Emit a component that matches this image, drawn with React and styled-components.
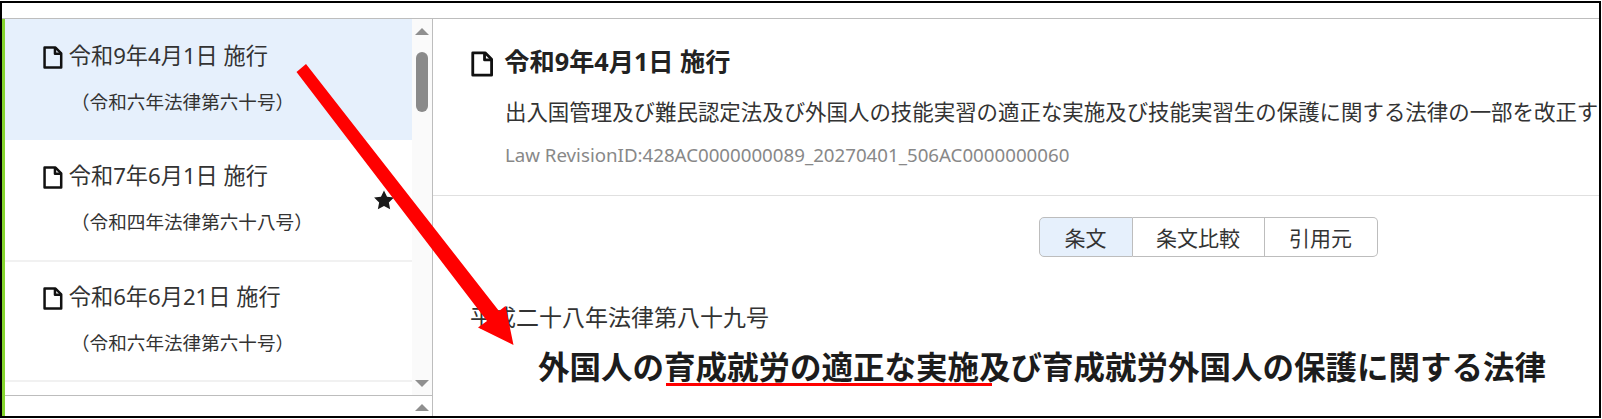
import React from "react";
import styled, { createGlobalStyle } from "styled-components";

const GlobalStyle = createGlobalStyle`
  html, body {
    margin: 0;
    padding: 0;
    background: #fff;
  }
  body {
    font-family: "Noto Sans", "Noto Sans CJK JP", sans-serif;
    color: #333;
  }
`;

const Frame = styled.div`
  position: relative;
  box-sizing: border-box;
  width: 1601px;
  height: 417px;
  margin-top: 1px;
  border: 2px solid #000;
  overflow: hidden;
  display: flex;
  flex-direction: column;
`;

const TopStrip = styled.div`
  height: 15px;
  flex: none;
  border-bottom: 1px solid #bdbdbd;
`;

const Columns = styled.div`
  flex: 1;
  min-height: 0;
  display: flex;
`;

const Sidebar = styled.div`
  flex: none;
  width: 427px;
  border-left: 3px solid #86d52f;
  border-right: 1px solid #bdbdbd;
  display: flex;
  flex-direction: column;
`;

const ListArea = styled.div`
  height: 376px;
  flex: none;
  display: flex;
  border-bottom: 1px solid #bdbdbd;
`;

const List = styled.div`
  flex: 1;
  min-width: 0;
`;

const Item = styled.div`
  position: relative;
  box-sizing: border-box;
  height: ${(p) => p.$height}px;
  padding-top: ${(p) => p.$pad}px;
  background: ${(p) => (p.$active ? "#e6f0fc" : "#fff")};
  border-bottom: ${(p) => (p.$active ? "none" : "2px solid #f1f1f1")};
`;

const ItemTitle = styled.div`
  display: flex;
  align-items: center;
  padding-left: 38px;
  gap: 6px;
  font-size: 22.2px;
  line-height: 26px;
  color: #333;
`;

const ItemLaw = styled.div`
  margin-top: 21px;
  padding-left: 66px;
  font-size: 18.6px;
  line-height: 24px;
  color: #333;
`;

const StarMark = styled.svg`
  position: absolute;
  right: 17px;
  top: 49px;
  width: 22px;
  height: 22px;
  fill: #1a1a1a;
`;

const ScrollTrack = styled.div`
  position: relative;
  flex: none;
  width: 20px;
  background: #fafafa;
`;

const Arrow = styled.div`
  position: absolute;
  left: 3px;
  top: ${(p) => p.$top}px;
  width: 0;
  height: 0;
  border-left: 7px solid transparent;
  border-right: 7px solid transparent;
  ${(p) => (p.$down ? "border-top: 7px solid #8f8f8f;" : "border-bottom: 7px solid #8f8f8f;")}
`;

const Thumb = styled.div`
  position: absolute;
  left: 4px;
  top: 33px;
  width: 12px;
  height: 60px;
  border-radius: 6px;
  background: #8a8a8a;
`;

const LowerScroll = styled.div`
  flex: 1;
  display: flex;
  justify-content: flex-end;
`;

const LowerTrack = styled.div`
  position: relative;
  width: 20px;
`;

const Main = styled.div`
  flex: 1;
  min-width: 0;
  overflow: hidden;
`;

const MainInner = styled.div`
  width: 1550px;
`;

const Summary = styled.div`
  height: 177px;
  box-sizing: border-box;
  padding: 26px 0 0 38px;
  border-bottom: 1px solid #e0e0e0;
`;

const SummaryTitle = styled.div`
  display: flex;
  align-items: center;
  gap: 11px;
  font-size: 25.2px;
  font-weight: 700;
  line-height: 28px;
  color: #222;
`;

const Description = styled.div`
  margin-top: 22px;
  padding-left: 34px;
  font-size: 21.45px;
  line-height: 26px;
  white-space: nowrap;
  color: #333;
`;

const RevisionId = styled.div`
  margin-top: 20px;
  padding-left: 34px;
  font-size: 18.7px;
  line-height: 20px;
  color: #888;
`;

const Tabs = styled.div`
  display: flex;
  justify-content: center;
  margin-top: 21px;
`;

const Tab = styled.div`
  box-sizing: border-box;
  width: ${(p) => p.$width}px;
  height: 40px;
  display: flex;
  align-items: center;
  justify-content: center;
  font-size: 21px;
  color: #333;
  background: ${(p) => (p.$active ? "#e6f0fc" : "#fff")};
  border: 1px solid #bdbdbd;
  border-left-width: ${(p) => (p.$first ? "1px" : "0")};
  border-radius: ${(p) => (p.$first ? "5px 0 0 5px" : p.$last ? "0 5px 5px 0" : "0")};
`;

const LawNumber = styled.div`
  margin: 45px 0 0 37px;
  font-size: 23px;
  line-height: 30px;
  color: #333;
`;

const LawName = styled.div`
  margin: 13px 0 0 105px;
  font-size: 31.5px;
  font-weight: 700;
  line-height: 44px;
  white-space: nowrap;
  color: #1c1c1c;
`;

const Underlined = styled.span`
  position: relative;
  &::after {
    content: "";
    position: absolute;
    left: 2px;
    right: -13px;
    bottom: 2px;
    height: 3px;
    background: #f00;
  }
`;

const RedArrow = styled.svg`
  position: absolute;
  left: -2px;
  top: -3px;
  width: 1602px;
  height: 419px;
  pointer-events: none;
`;

const DocSvg = styled.svg`
  flex: none;
  margin-top: ${(p) => p.$drop}px;
`;

function DocIcon({ size = 23, drop = 2 }) {
  return (
    <DocSvg $drop={drop} width={size * 0.86} height={size} viewBox="0 0 19 22" fill="none" stroke="#111" strokeWidth="2.4" strokeLinejoin="round">
      <path d="M1.5 1.5h10.5l5.5 5.5v13.5h-16z" />
      <path d="M11.5 1.5v6h6" />
    </DocSvg>
  );
}

const items = [
  { date: "令和9年4月1日 施行", law: "（令和六年法律第六十号）", active: true, height: 121, pad: 24 },
  { date: "令和7年6月1日 施行", law: "（令和四年法律第六十八号）", star: true, height: 122, pad: 23 },
  { date: "令和6年6月21日 施行", law: "（令和六年法律第六十号）", height: 120, pad: 22 },
];

export default function App() {
  return (
    <>
      <GlobalStyle />
      <Frame>
        <TopStrip />
        <Columns>
          <Sidebar>
            <ListArea>
              <List>
                {items.map((item) => (
                  <Item key={item.date} $active={item.active} $height={item.height} $pad={item.pad}>
                    <ItemTitle>
                      <DocIcon />
                      {item.date}
                    </ItemTitle>
                    <ItemLaw>{item.law}</ItemLaw>
                    {item.star && (
                      <StarMark viewBox="0 0 24 24">
                        <path d="M12 1.5l3.3 6.9 7.5 1-5.5 5.2 1.4 7.5L12 18.5l-6.7 3.6 1.4-7.5L1.2 9.4l7.5-1z" />
                      </StarMark>
                    )}
                  </Item>
                ))}
              </List>
              <ScrollTrack>
                <Arrow $top={9} />
                <Thumb />
                <Arrow $down $top={361} />
              </ScrollTrack>
            </ListArea>
            <LowerScroll>
              <LowerTrack>
                <Arrow $top={8} />
              </LowerTrack>
            </LowerScroll>
          </Sidebar>
          <Main>
            <MainInner>
              <Summary>
                <SummaryTitle>
                  <DocIcon size={26} drop={6} />
                  令和9年4月1日 施行
                </SummaryTitle>
                <Description>
                  出入国管理及び難民認定法及び外国人の技能実習の適正な実施及び技能実習生の保護に関する法律の一部を改正する法律
                </Description>
                <RevisionId>Law RevisionID:428AC0000000089_20270401_506AC0000000060</RevisionId>
              </Summary>
              <Tabs>
                <Tab $first $active $width={94}>条文</Tab>
                <Tab $width={132}>条文比較</Tab>
                <Tab $last $width={113}>引用元</Tab>
              </Tabs>
              <LawNumber>平成二十八年法律第八十九号</LawNumber>
              <LawName>
                外国人の<Underlined>育成就労の適正な実施</Underlined>及び育成就労外国人の保護に関する法律
              </LawName>
            </MainInner>
          </Main>
        </Columns>
        <RedArrow viewBox="0 0 1602 419">
          <path d="M306 64 L296.5 72 L487 321 L478 327.5 L513.5 345 L505.5 306 L499 311 Z" fill="#f00" />
        </RedArrow>
      </Frame>
    </>
  );
}
